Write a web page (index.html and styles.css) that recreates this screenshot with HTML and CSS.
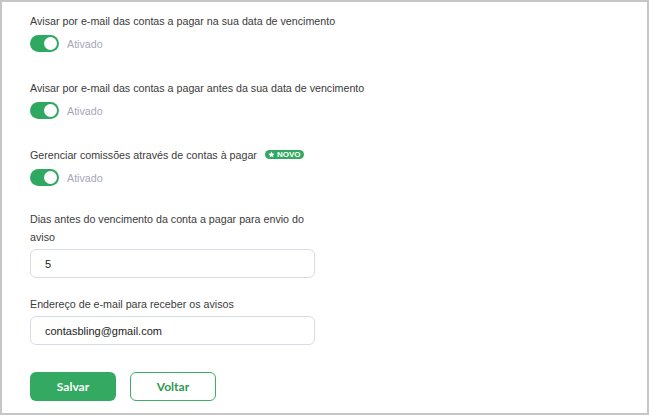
FILE: index.html
```html
<!DOCTYPE html>
<html lang="pt-BR">
<head>
    <meta charset="UTF-8">
    <meta name="viewport" content="width=device-width, initial-scale=1.0">
    <title>Contas a pagar | Configurações</title>
    <link rel="stylesheet" href="styles.css">
</head>
<body>
    <div class="panel">
        <div class="option">
            <p class="label">Avisar por e-mail das contas a pagar na sua data de vencimento</p>
            <div class="switch-row">
                <span class="switch"><span class="knob"></span></span>
                <span class="state">Ativado</span>
            </div>
        </div>

        <div class="option">
            <p class="label">Avisar por e-mail das contas a pagar antes da sua data de vencimento</p>
            <div class="switch-row">
                <span class="switch"><span class="knob"></span></span>
                <span class="state">Ativado</span>
            </div>
        </div>

        <div class="option last">
            <p class="label">Gerenciar comissões através de contas à pagar
                <span class="badge">
                    <svg width="7" height="7" viewBox="0 0 10 10"><path d="M5 0.6l1.35 2.8 3.05.4-2.25 2.1.57 3.03L5 7.45 2.28 8.930l.57-3.03L.6 3.8l3.05-.4z" fill="#fff"/></svg>
                    NOVO
                </span>
            </p>
            <div class="switch-row">
                <span class="switch"><span class="knob"></span></span>
                <span class="state">Ativado</span>
            </div>
        </div>

        <div class="field">
            <label class="label" for="dias">Dias antes do vencimento da conta a pagar para envio do aviso</label>
            <input class="input" id="dias" type="text" value="5">
        </div>

        <div class="field">
            <label class="label" for="email">Endereço de e-mail para receber os avisos</label>
            <input class="input" id="email" type="text" value="contasbling@gmail.com">
        </div>

        <div class="actions">
            <button class="btn btn-save">Salvar</button>
            <button class="btn btn-back">Voltar</button>
        </div>
    </div>
</body>
</html>
```

FILE: styles.css
```css
body {
    margin: 0;
    padding: 0;
    background: #fff;
    font-family: Arial, "Liberation Sans", sans-serif;
}

.panel {
    box-sizing: border-box;
    width: 649px;
    height: 415px;
    border: 2px solid #c6c6c6;
    padding: 10px 28px 0;
    background: #fff;
}

.label {
    display: block;
    margin: 0;
    font-size: 10.7px;
    line-height: 18px;
    color: #3b3b3b;
}

.option {
    margin-bottom: 27px;
}

.option.last {
    margin-bottom: 24px;
}

.switch-row {
    display: flex;
    align-items: center;
    gap: 8px;
    margin-top: 5px;
}

.switch {
    position: relative;
    width: 29px;
    height: 17px;
    border-radius: 9px;
    background: #2fa860;
}

.knob {
    position: absolute;
    top: 2px;
    right: 2px;
    width: 13px;
    height: 13px;
    border-radius: 50%;
    background: #fff;
}

.state {
    font-size: 10.7px;
    color: #a6a6b8;
}

.badge {
    display: inline-flex;
    align-items: center;
    gap: 2px;
    margin-left: 5px;
    padding: 0 4px 0 3px;
    height: 9px;
    border-radius: 5px;
    background: #33a862;
    color: #fff;
    font-size: 8px;
    font-weight: bold;
    line-height: 9px;
    vertical-align: 1px;
}

.field {
    width: 285px;
    margin-bottom: 17px;
}

.field .label {
    margin-bottom: 3px;
}

.input {
    box-sizing: border-box;
    width: 285px;
    height: 29px;
    padding: 0 14px;
    border: 1px solid #d6dce5;
    border-radius: 6px;
    font-family: Arial, "Liberation Sans", sans-serif;
    font-size: 11px;
    color: #222;
    outline: none;
}

.actions {
    display: flex;
    gap: 14px;
    margin-top: 27px;
}

.btn {
    box-sizing: border-box;
    width: 86px;
    height: 29px;
    border-radius: 6px;
    font-family: Lato, sans-serif;
    font-size: 12px;
    font-weight: bold;
    cursor: pointer;
}

.btn-save {
    border: none;
    background: #33a962;
    color: #fff;
}

.btn-back {
    border: 1px solid #3bae68;
    background: #fff;
    color: #2d9a4f;
}
```
